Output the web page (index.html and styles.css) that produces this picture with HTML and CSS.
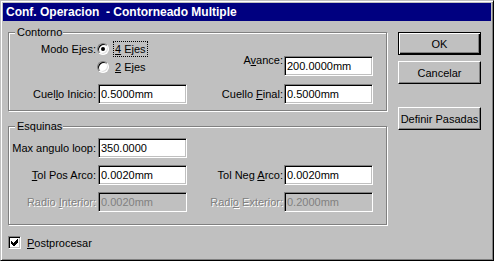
FILE: index.html
```html
<!DOCTYPE html>
<html>
	<head>
		<meta charset="UTF-8">
		<title>Conf. Operacion</title>
		<link rel="stylesheet" href="styles.css">
	</head>
	<body>
		<div class="window">
			<div class="titlebar">Conf. Operacion  - Contorneado Multiple</div>
			<div class="client">
				<div class="main">
					<!-- grupo Contorno -->
					<div class="group contorno">
						<div class="caption">Contorno</div>
						<div class="fields">
							<span class="label modo">Modo Ejes:</span>
							<div class="radios">
								<div class="radio-row"><span class="radio checked"></span><span class="opt focus"><u>4</u> Ejes</span></div>
								<div class="radio-row"><span class="radio"></span><span class="opt"><u>2</u> Ejes</span></div>
							</div>
							<span class="label right low">A<u>v</u>ance:</span>
							<input class="edit low" type="text" value="200.0000mm">
							<span class="label">Cuel<u>l</u>o Inicio:</span>
							<input class="edit" type="text" value="0.5000mm">
							<span class="label right">Cuello <u>F</u>inal:</span>
							<input class="edit" type="text" value="0.5000mm">
						</div>
					</div>
					<!-- grupo Esquinas -->
					<div class="group esquinas">
						<div class="caption">Esquinas</div>
						<div class="fields">
							<span class="label first">Max angulo loop:</span>
							<input class="edit" type="text" value="350.0000">
							<span class="label first"><u>T</u>ol Pos Arco:</span>
							<input class="edit" type="text" value="0.0020mm">
							<span class="label right">Tol Neg <u>A</u>rco:</span>
							<input class="edit" type="text" value="0.0020mm">
							<span class="label first off">Radio <u>I</u>nterior:</span>
							<input class="edit" type="text" value="0.0020mm" disabled>
							<span class="label right off">Radi<u>o</u> Exterior:</span>
							<input class="edit" type="text" value="0.2000mm" disabled>
						</div>
					</div>
					<div class="check-row">
						<span class="checkbox">
							<svg width="9" height="9" viewBox="0 0 9 9"><polygon points="1,3 3,5 7,1 8,1 8,4 4,8 3,8 1,6" fill="#000"/></svg>
						</span>
						<span class="check-label"><u>P</u>ostprocesar</span>
					</div>
				</div>
				<div class="buttons">
					<button class="btn default">OK</button>
					<button class="btn">Cancelar</button>
					<button class="btn extra">Definir Pasadas</button>
				</div>
			</div>
		</div>
	</body>
</html>
```
FILE: styles.css
```css
body {
	margin: 0;
	background-color: #c0c0c0;
	font-family: "Liberation Sans", Arial, sans-serif;
	font-size: 11px;
	color: #000;
}

.window {
	width: 494px;
	height: 261px;
	box-sizing: border-box;
	border: 1px solid;
	border-color: #c0c0c0 #000 #000 #c0c0c0;
	box-shadow: inset 1px 1px #fff, inset -1px -1px #808080;
	padding: 2px;
	background-color: #c0c0c0;
}

.titlebar {
	height: 18px;
	line-height: 18px;
	padding-left: 3px;
	background-color: #000080;
	color: #fff;
	font-weight: bold;
	font-size: 12px;
	white-space: pre;
}

.client {
	display: flex;
	gap: 11px;
	padding: 11px 0 0 5px;
}

.main {
	width: 379px;
}

/* marco grabado de los grupos */
.group {
	box-sizing: border-box;
	border: 1px solid #808080;
	box-shadow: inset 1px 1px #fff, 1px 1px #fff;
}

.contorno {
	height: 79px;
}

.esquinas {
	height: 99px;
	margin-top: 15px;
}

.caption {
	width: max-content;
	margin: -7px 0 0 6px;
	padding: 0 1px 0 2px;
	line-height: 13px;
	background-color: #c0c0c0;
}

.fields {
	display: grid;
	grid-template-columns: 89px 89px 97px 89px;
	row-gap: 8px;
	margin-top: 1px;
}

.esquinas .fields {
	row-gap: 7px;
	margin-top: 5px;
}

.label {
	text-align: right;
	padding-right: 2px;
	line-height: 20px;
	white-space: nowrap;
}

.label.right {
	padding-right: 1px;
}

.label.first {
	grid-column: 1;
}

.label.modo {
	align-self: start;
	line-height: 18px;
}

.low {
	align-self: end;
	margin-bottom: 6px;
}

.off {
	color: #808080;
	text-shadow: 1px 1px 0 #fff;
}

.edit {
	width: 89px;
	height: 20px;
	box-sizing: border-box;
	margin: 0;
	padding: 0 2px;
	border: 1px solid;
	border-color: #808080 #fff #fff #808080;
	box-shadow: inset 1px 1px #000, inset -1px -1px #c0c0c0;
	background-color: #fff;
	font-family: "Liberation Sans", Arial, sans-serif;
	font-size: 11px;
	color: #000;
	outline: none;
}

.edit:disabled {
	background-color: #c0c0c0;
	color: #808080;
}

.radio-row {
	display: flex;
	align-items: center;
	height: 18px;
}

.radio {
	display: flex;
	align-items: center;
	justify-content: center;
	width: 12px;
	height: 12px;
	box-sizing: border-box;
	margin-left: -1px;
	border: 1px solid;
	border-color: #808080 #fff #fff #808080;
	border-radius: 50%;
	box-shadow: inset 1px 1px #000, inset -1px -1px #dfdfdf;
	background-color: #fff;
}

.radio.checked::after {
	content: "";
	width: 4px;
	height: 4px;
	border-radius: 50%;
	background-color: #000;
}

.opt {
	margin-left: 4px;
	padding: 0 1px;
	line-height: 14px;
	border: 1px dotted transparent;
}

.opt.focus {
	border-color: #000;
}

.check-row {
	display: flex;
	align-items: center;
	margin-top: 11px;
}

.checkbox {
	display: flex;
	align-items: center;
	justify-content: center;
	width: 13px;
	height: 13px;
	box-sizing: border-box;
	border: 1px solid;
	border-color: #808080 #fff #fff #808080;
	box-shadow: inset 1px 1px #000, inset -1px -1px #c0c0c0;
	background-color: #fff;
}

.checkbox svg {
	display: block;
	shape-rendering: crispEdges;
}

.check-label {
	margin-left: 6px;
}

.buttons {
	display: flex;
	flex-direction: column;
	width: 83px;
}

.btn {
	height: 23px;
	margin: 0;
	padding: 0;
	border: 1px solid;
	border-color: #fff #000 #000 #fff;
	box-shadow: inset -1px -1px #808080;
	background-color: #c0c0c0;
	font-family: "Liberation Sans", Arial, sans-serif;
	font-size: 11px;
	color: #000;
}

.btn + .btn {
	margin-top: 6px;
}

.btn.default {
	border-color: #000;
	box-shadow: inset 1px 1px #fff, inset -1px -1px #000, inset -2px -2px #808080;
}

.btn.extra {
	margin-top: 23px;
}
```
